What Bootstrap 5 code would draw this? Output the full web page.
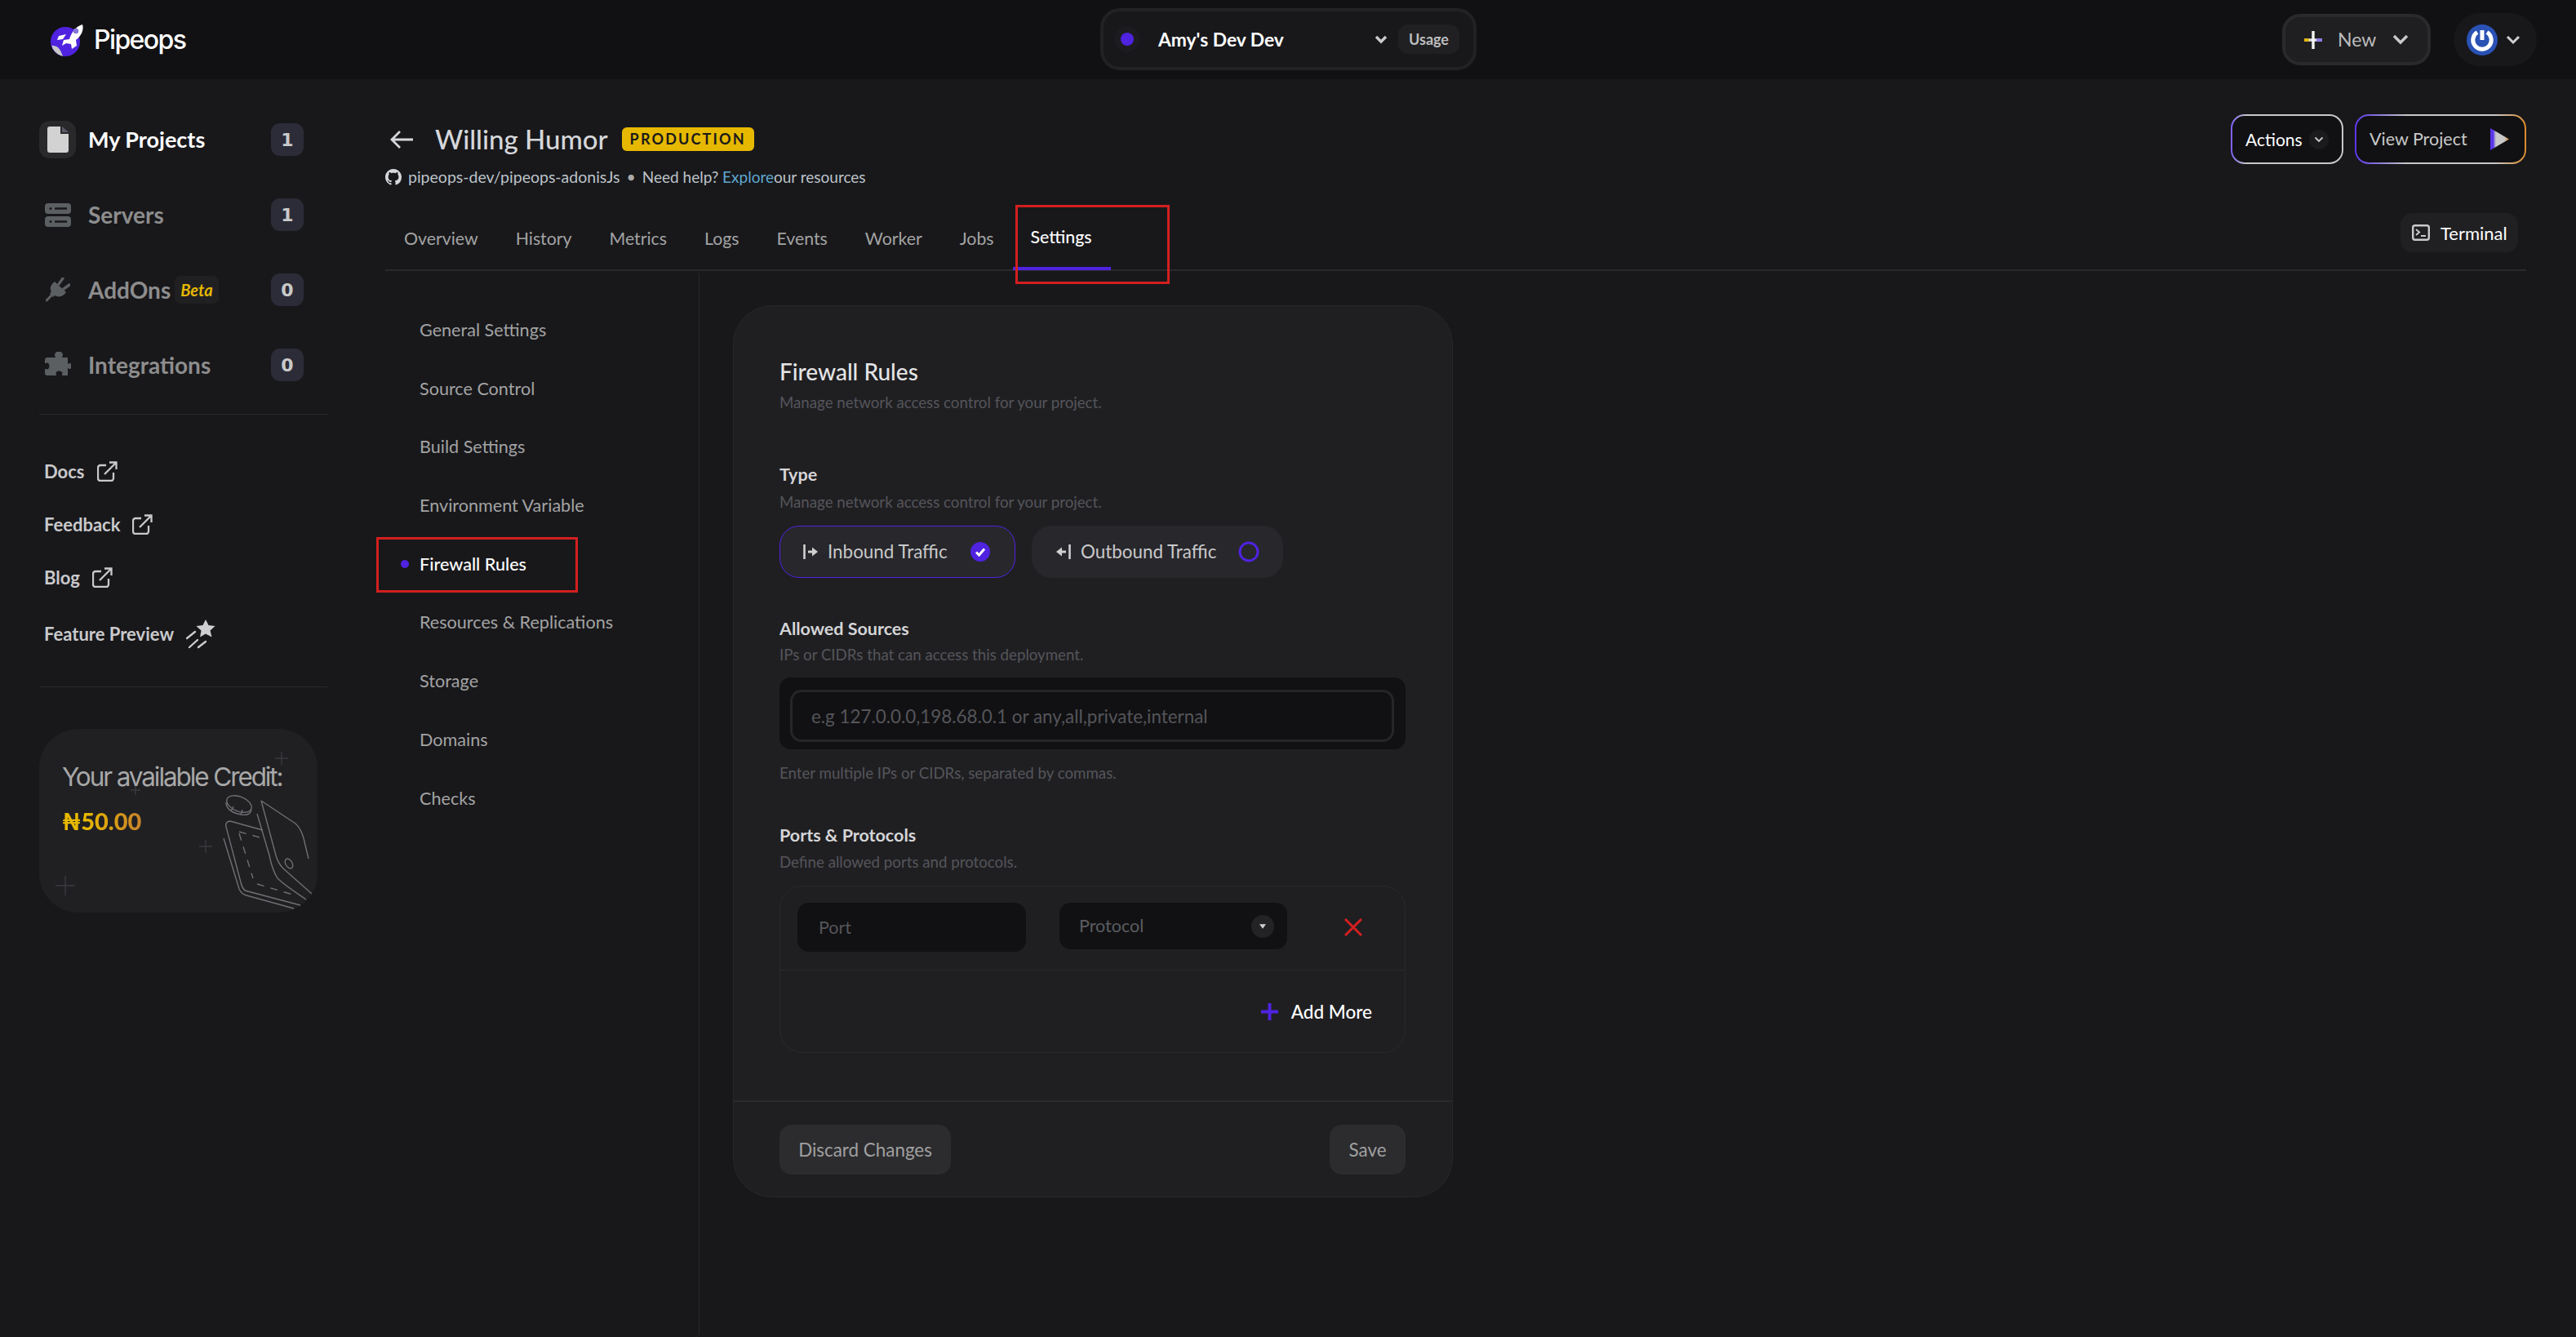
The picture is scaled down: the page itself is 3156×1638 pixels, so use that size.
<!DOCTYPE html>
<html lang="en">
<head>
<meta charset="utf-8">
<title>Pipeops - Firewall Rules</title>
<link href="https://cdn.jsdelivr.net/npm/bootstrap@5.3.0/dist/css/bootstrap.min.css" rel="stylesheet">
<style>
html,body{height:100%}
body{background:#18181b;color:#fff;font-family:"Lato","Liberation Sans",sans-serif;width:3156px;height:1638px;overflow:hidden}
svg{display:block;flex:none}
.topbar{height:97px;background:#111113;padding:0 48px 0 62px;position:relative}
.logo-text{font-family:"Inter","Liberation Sans",sans-serif;font-weight:500;font-size:32px;letter-spacing:-1.6px;color:#fff;margin-left:12px}
.env-pill{position:absolute;left:1348px;top:10px;width:461px;height:76px;background:#18181b;border:4px solid #222225;border-radius:24px;padding:0 17px 0 13px}
.env-dot{width:32px;height:32px;border-radius:50%;background:#1c1c20;display:flex;align-items:center;justify-content:center;margin-right:22px}
.env-dot i{display:block;width:16px;height:16px;border-radius:50%;background:#4f23e0}
.env-name{font-size:22.800px;font-weight:700;color:#fff}
.usage-btn{background:#202023;color:#bdbdbd;font-size:18px;font-weight:700;border:0;border-radius:12px;width:75px;height:36px;padding:0;margin-left:13px}
.new-btn{width:182px;height:63px;background:#1f1f22;border:4px solid #2a2a2d;border-radius:22px;color:#bdbdbd;font-size:23px;padding:0 23px;margin-right:28px}
.new-btn:hover{background:#1f1f22;color:#bdbdbd;border-color:#2a2a2d}
.new-label{margin-left:19px}
.avatar-pill{width:102px;height:65px;border-radius:33px;background:#18181b;padding-left:16px;gap:10px}
.side{width:472px;flex:none;padding:28px 0 0 48px}
.side-item{height:92px;width:324px;font-size:28px;font-weight:700;color:#8d8d8d;padding:0}
.side-item.now{color:#fff;font-size:27px}
.ico-box{width:45px;height:46px;border-radius:13px;display:flex;align-items:center;justify-content:center;margin-right:15px}
.now .ico-box{background:#29292c}
.count{width:40px;height:40px;border-radius:11px;background:#2c2c38;color:#c9c9c9;font-family:"DejaVu Sans","Liberation Sans",sans-serif;font-size:22px;font-weight:700;display:flex;align-items:center;justify-content:center;padding:0;margin-left:auto}
.beta{font-style:italic;font-size:20px;font-weight:700;color:#e6b800;background:#202023;border-radius:7px;padding:2px 7px;margin-left:5px}
.side-rule{width:353px;height:1px;background:#29292c;margin:14px 0 0}
.side-links{padding:37px 0 0 6px;height:319px}
.side-link{height:65px;font-size:22px;font-weight:700;color:#c9c9cb;text-decoration:none;gap:15px}
.side-link:nth-child(4){margin-top:4px}
.credit{width:341px;height:225px;margin-top:51px;background:#202023;border-radius:48px;position:relative;overflow:hidden;padding:40px 0 0 28px}
.credit-title{font-family:"Inter","Liberation Sans",sans-serif;font-size:31.500px;line-height:38px;letter-spacing:-2.100px;color:#a8a8a8;white-space:nowrap}
.credit-sum{font-size:29px;font-weight:900;line-height:36px;margin-top:17px;background:linear-gradient(90deg,#e6b800 30%,#c9822a);-webkit-background-clip:text;background-clip:text;color:transparent;display:inline-block}
.credit-art{position:absolute;left:0;top:0}
.main-area{flex:1;min-width:0;padding:43px 61px 0 0}
.title-row{height:112px}
.back-arrow{margin:0 27px 0 6px}
.title-text{font-size:33px;font-weight:500;color:#d5d7da;line-height:61px;margin:0}
.prod{background:#e6b800;color:#1a1a1a;font-size:18px;font-weight:700;letter-spacing:2.150px;border-radius:6px;padding:0 10px;height:29px;line-height:29px;margin-left:17px}
.repo{font-size:19.500px;color:#bcc3c9;line-height:24px;margin-top:4px}
.repo a{color:#5fa7cf;text-decoration:none}
.repo b{font-weight:400;margin:0 8px;color:#aaa}
.repo-help{font-size:19px}
.grad-btn{height:61px;border:2px solid transparent;border-radius:17px;font-size:21px;padding:0 16px}
.actions-btn{width:138px;color:#fff;background:linear-gradient(#111113,#111113) padding-box,linear-gradient(90deg,#7b5cf0,#c8c8c8 14%,#c8c8c8) border-box}
.view-btn{width:210px;color:#c9c9c9;margin-left:14px;font-size:21.500px;background:linear-gradient(#111113,#111113) padding-box,linear-gradient(90deg,#5a35ea,#c8c8c8 30%,#c8c8c8 82%,#d98a2a) border-box}
.chev-dot{width:24px;height:24px;border-radius:50%;background:#1b1b1e;display:flex;align-items:center;justify-content:center}
.play-ico{margin-right:3px}
.tabs-row{height:80px;border-bottom:2px solid #2a2a2d}
.tab-list{height:80px}
.tab-link{position:relative;font-size:21.300px;color:#a3a3a3;padding:4px 23px 0;height:80px;display:flex;align-items:center}
.tab-link:hover{color:#a3a3a3}
.tab-link.active-tab{color:#fff;border-bottom:4px solid #4f23e0;font-weight:500;width:120px;padding:4px 0 0 22px}
.red-a{position:absolute;left:3px;top:0;width:189px;height:97px;border:3px solid #d41f1f;pointer-events:none}
.term-btn{width:144px;height:48px;background:#202023;color:#fff;border:0;border-radius:14px;font-size:22px;margin:0 10px 12px 0;padding:0 14px;gap:13px}
.term-btn:hover{background:#202023;color:#fff}
.set-nav{width:385px;flex:none;border-right:1px solid #29292c;padding-top:43px;height:1306px;gap:13.700px}
.set-item{height:58px;font-size:21.600px;color:#a3a3a3;padding:0 0 0 42px;position:relative;line-height:58px;background:none;border:0;border-radius:0}
.set-item.here{color:#fff;font-weight:500;padding-left:19px;display:flex;align-items:center;gap:13px}
.set-item.here i{display:block;width:10px;height:10px;border-radius:50%;background:#4f23e0}
.red-b{position:absolute;left:-11px;top:-4px;width:247px;height:68px;border:3px solid #d41f1f;pointer-events:none}
.fw-card{width:882px;height:1093px;margin:42px 0 0 41px;background:#1f1f22;border:1px solid #27272b;border-radius:48px;color:#fff}
.fw-body{padding:63px 57px 0 56px;height:974px}
.fw-title{font-size:28px;font-weight:500;line-height:34px;color:#e4e4e6;margin:0}
.fw-sub{font-size:18.700px;line-height:22px;color:#55555a;margin:0}
.fw-label{font-size:21.500px;font-weight:700;line-height:26px;color:#d5d5d7;margin:0}
.m10{margin-top:10px}.m8{margin-top:8px}.m9{margin-top:9px}.m10b{margin-top:10px}
.m64{margin-top:64px}.m49{margin-top:49px}.m52{margin-top:52px}.m18{margin-top:18px}
.toggles{margin-top:18px;gap:20px}
.toggle{height:64px;background:#27272c;border-radius:24px;border:1.500px solid #27272c;font-size:22.400px;color:#c9c9c9;padding:0;gap:12px}
.toggle.on{width:289px;border-color:#4f23e0;padding-left:28px}
.toggle.off{width:308px;padding-left:29px}
.toggle .sp{margin-left:auto}
.on .sp{margin-right:30px}.off .sp{margin-right:28px}
.ip-wrap{margin-top:17px;height:88px;background:#111113;border-radius:14px;padding:15px 14px 9px 13px}
.ip-input{height:64px;background:#111113;border:3px solid #26262a;border-radius:14px;color:#fff;font-size:22.400px;padding:0 23px;box-shadow:none}
.ip-input::placeholder,.port-input::placeholder{color:#55555a;opacity:1}
.port-box{margin-top:18px;height:205px;border:1px solid #29292c;border-radius:28px;overflow:hidden}
.port-row{height:103px;border-bottom:1px solid #29292c;padding:20px 0 0 21px}
.port-input{width:280px;height:60px;background:#111113;border:0;border-radius:14px;color:#fff;font-size:21.500px;padding:0 26px;box-shadow:none}
.proto{width:279px;height:57px;background:#111113;border-radius:14px;margin-left:41px;padding:0 16px 0 24px;font-size:21.500px;color:#5c5c60}
.proto-c{width:28px;height:28px;border-radius:50%;background:#232326;display:flex;align-items:center;justify-content:center}
.x-icon{margin-left:70px;margin-top:19px}
.add-row{height:101px;padding:0 40px 0 0;gap:16px;font-size:22.500px;font-weight:500;color:#fff}
.fw-foot{height:118px;border-top:2px solid #2a2a2d;padding:28px 57px 0 56px;background:none;border-radius:0}
.foot-btn{height:61px;background:#2c2c2f;border:0;border-radius:15px;color:#a0a0a0;font-size:22.400px;padding:0}
.foot-btn:hover{background:#2c2c2f;color:#a0a0a0}
.w-disc{width:210px}.w-save{width:93px}
</style>
</head>
<body>
<nav class="topbar d-flex align-items-center justify-content-between">
  <div class="d-flex align-items-center">
    <svg width="41" height="40" viewBox="0 0 41 40">
      <circle cx="18" cy="22" r="18" fill="#4f23e0"/>
      <path d="M2 27c5 0 8 2 10 6 1 2 2 4 3 7A18 18 0 0 1 1 26z" fill="#c8c8c8"/>
      <path d="M39 1c2 6-1 14-8 19l1 7-6 4-1-6-6-1-5 3 2-7 7-1C26 9 32 3 39 1z" fill="#fff"/>
      <path d="M10 15l9-2-4 6-7 1z" fill="#fff"/>
      <circle cx="31" cy="9" r="3.200" fill="#8474d8"/>
    </svg>
    <span class="logo-text">Pipeops</span>
  </div>
  <div class="env-pill d-flex align-items-center">
    <span class="env-dot"><i></i></span>
    <span class="env-name">Amy's Dev Dev</span>
    <svg class="ms-auto" width="16" height="11" viewBox="0 0 16 11"><path d="M2 2l6 6 6-6" fill="none" stroke="#c9c9c9" stroke-width="3.400"/></svg>
    <button class="btn usage-btn" type="button">Usage</button>
  </div>
  <div class="d-flex align-items-center ms-auto">
    <button class="btn new-btn d-flex align-items-center" type="button">
      <svg width="22" height="22" viewBox="0 0 22 22"><path d="M0 11h22" stroke="#e6e6e6" stroke-width="3.400"/><path d="M0 11h6" stroke="#e6b800" stroke-width="3.400"/><path d="M15 11h7" stroke="#8a74e8" stroke-width="3.400"/><path d="M11 0v22" stroke="#f4f4f4" stroke-width="3.400"/></svg>
      <span class="new-label">New</span>
      <svg class="ms-auto" width="20" height="13" viewBox="0 0 20 13"><path d="M2 2l8 8 8-8" fill="none" stroke="#c9c9c9" stroke-width="3.400"/></svg>
    </button>
    <div class="avatar-pill d-flex align-items-center">
      <svg width="38" height="38" viewBox="0 0 38 38"><circle cx="19" cy="19" r="19" fill="#2a52b5"/><path d="M13 9.500a11.200 11.200 0 1 0 12 0" fill="none" stroke="#fff" stroke-width="5"/><path d="M19 7v12" stroke="#fff" stroke-width="5"/></svg>
      <svg width="18" height="12" viewBox="0 0 18 12"><path d="M2 2l7 7 7-7" fill="none" stroke="#d0d0d0" stroke-width="3"/></svg>
    </div>
  </div>
</nav>

<div class="d-flex">
  <aside class="side">
    <div class="side-item now d-flex align-items-center">
      <span class="ico-box"><svg width="26" height="32" viewBox="0 0 26 32"><path d="M3 0h13v9h10v20a3 3 0 0 1-3 3H3a3 3 0 0 1-3-3V3a3 3 0 0 1 3-3z" fill="#d2d2d2"/><path d="M18 0l8 7h-8z" fill="#5a5a66"/></svg></span>
      <span>My Projects</span><span class="count">1</span>
    </div>
    <div class="side-item d-flex align-items-center">
      <span class="ico-box"><svg width="32" height="29" viewBox="0 0 32 29"><rect width="32" height="13" rx="4" fill="#5c5f62"/><rect y="16" width="32" height="13" rx="4" fill="#5c5f62"/><path d="M12 6.500h15M12 22.500h15" stroke="#18181b" stroke-width="2.400"/><circle cx="7" cy="6.500" r="1.500" fill="#18181b"/><circle cx="7" cy="22.500" r="1.500" fill="#18181b"/></svg></span>
      <span>Servers</span><span class="count">1</span>
    </div>
    <div class="side-item d-flex align-items-center">
      <span class="ico-box"><svg width="30" height="30" viewBox="0 0 30 30"><path d="M1 28l7-7" stroke="#5c5f62" stroke-width="3" stroke-linecap="round"/><path d="M11 5l14 13c-3 5-9 7-14 4l-2 2-4-4 2-3C4 13 7 8 11 5z" fill="#5c5f62"/><path d="M16 8l5-7M22 14l7-5" stroke="#5c5f62" stroke-width="3.400" stroke-linecap="round"/></svg></span>
      <span>AddOns</span><span class="beta">Beta</span><span class="count">0</span>
    </div>
    <div class="side-item d-flex align-items-center">
      <span class="ico-box"><svg width="32" height="32" viewBox="0 0 32 32"><path d="M12 4a5 4.500 0 0 1 10 0c0 1.500-1 2-1 3h7v8c1 0 1.500-1 2-1a3.500 3.500 0 0 1 0 7c-.5 0-1-1-2-1v9h-7c0-2 1-3 0-4-2-2-6-2-7 0-1 1 0 3 0 4H3a3 3 0 0 1-3-3v-5c2 0 3 1 4 0 2-2 2-5 0-7-1-1-2 0-4 0V10a3 3 0 0 1 3-3h10c0-1-1-1.500-1-3z" fill="#5c5f62"/></svg></span>
      <span>Integrations</span><span class="count">0</span>
    </div>
    <div class="side-rule"></div>
    <div class="side-links d-flex flex-column">
      <a class="side-link d-flex align-items-center" href="#">Docs<svg width="25" height="25" viewBox="0 0 25 25"><path d="M11 5H4a3 3 0 0 0-3 3v13a3 3 0 0 0 3 3h13a3 3 0 0 0 3-3v-7M9 16L23 2M15 1.500h8.500V10" fill="none" stroke="#c9c9cb" stroke-width="2.300"/></svg></a>
      <a class="side-link d-flex align-items-center" href="#">Feedback<svg width="25" height="25" viewBox="0 0 25 25"><path d="M11 5H4a3 3 0 0 0-3 3v13a3 3 0 0 0 3 3h13a3 3 0 0 0 3-3v-7M9 16L23 2M15 1.500h8.500V10" fill="none" stroke="#c9c9cb" stroke-width="2.300"/></svg></a>
      <a class="side-link d-flex align-items-center" href="#">Blog<svg width="25" height="25" viewBox="0 0 25 25"><path d="M11 5H4a3 3 0 0 0-3 3v13a3 3 0 0 0 3 3h13a3 3 0 0 0 3-3v-7M9 16L23 2M15 1.500h8.500V10" fill="none" stroke="#c9c9cb" stroke-width="2.300"/></svg></a>
      <a class="side-link d-flex align-items-center" href="#">Feature Preview<svg width="36" height="36" viewBox="0 0 36 36"><path d="M24 0l3.500 7 8 1-6 5.500 2 8-7.500-4-7 4 1.500-8-6-5.500 8-1z" fill="#cfcfd1"/><path d="M1 23l10-8M4 34l10-9M15 34l9-7" stroke="#cfcfd1" stroke-width="2.300" stroke-linecap="round"/></svg></a>
    </div>
    <div class="side-rule"></div>
    <div class="credit">
      <svg class="credit-art" width="341" height="225" viewBox="0 0 341 225">
        <g stroke="#3a3a40" stroke-width="1.400" fill="none">
          <path d="M289 36h16M297 28v16M112 75h12M118 69v12M196 144h16M204 136v16M20 192h24M32 180v24"/>
        </g>
        <g stroke="#6f6f73" stroke-width="1.400" fill="none">
          <ellipse cx="245" cy="92" rx="16" ry="9" transform="rotate(22 245 92)"/>
          <path d="M229 90c0 7 6 12 14 14 7 2 15 3 17-5M235 101l3-6M247 105l2-6"/>
          <path d="M272 88l42 28c5 4 8 11 10 18l6 25M272 88l18 67c2 7 5 12 9 16l35 31"/>
          <path d="M267 104l15 51c2 10 5 20 10 28 8 8 22 17 35 26"/>
          <path d="M274 124l-40-11c-4 0-6 3-5 7l18 68c1 5 3 8 5 10l68 18"/>
          <path d="M226 134l19 62c2 5 5 7 9 8l58 16"/>
          <path d="M245 126l29 8M245 128l17 55M267 190l47 14" stroke-dasharray="9 8"/>
          <ellipse cx="306" cy="165" rx="4" ry="6.500" transform="rotate(-30 306 165)"/>
        </g>
      </svg>
      <div class="credit-title position-relative">Your available Credit:</div>
      <div class="credit-sum position-relative">₦50.00</div>
    </div>
  </aside>

  <main class="main-area">
    <div class="title-row d-flex justify-content-between align-items-start">
      <div>
        <div class="d-flex align-items-center">
          <svg class="back-arrow" width="28" height="22" viewBox="0 0 28 22"><path d="M28 11H2M12 1L2 11l10 10" fill="none" stroke="#d5d7da" stroke-width="2.800"/></svg>
          <h1 class="title-text">Willing Humor</h1>
          <span class="prod">PRODUCTION</span>
        </div>
        <div class="repo d-flex align-items-center">
          <svg class="me-2" width="20" height="20" viewBox="0 0 16 16"><path fill="#d5d7da" d="M8 0C3.580 0 0 3.580 0 8c0 3.540 2.290 6.530 5.470 7.590.4.070.55-.17.55-.38 0-.19-.01-.82-.01-1.490-2.010.37-2.530-.49-2.690-.94-.09-.23-.48-.94-.82-1.130-.28-.15-.68-.52-.01-.53.63-.01 1.080.58 1.230.82.720 1.210 1.870.87 2.330.66.070-.52.280-.87.510-1.070-1.780-.2-3.640-.89-3.640-3.950 0-.87.310-1.590.82-2.150-.08-.2-.36-1.020.08-2.120 0 0 .67-.21 2.200.82.640-.18 1.320-.27 2-.27s1.360.09 2 .27c1.530-1.040 2.200-.82 2.200-.82.44 1.100.16 1.920.08 2.120.51.560.82 1.270.82 2.150 0 3.070-1.870 3.750-3.650 3.950.29.250.54.730.54 1.480 0 1.070-.01 1.930-.01 2.200 0 .21.150.460.550.380A8.010 8.010 0 0 0 16 8c0-4.420-3.580-8-8-8z"/></svg>
          <span>pipeops-dev/pipeops-adonisJs</span><b>•</b><span class="repo-help">Need help? <a href="#">Explore</a>our resources</span>
        </div>
      </div>
      <div class="d-flex">
        <button class="btn grad-btn actions-btn d-flex align-items-center justify-content-between" type="button">Actions<span class="chev-dot"><svg width="12" height="8" viewBox="0 0 12 8"><path d="M1.500 1.500L6 6l4.500-4.500" fill="none" stroke="#c9c9c9" stroke-width="1.800"/></svg></span></button>
        <button class="btn grad-btn view-btn d-flex align-items-center justify-content-between" type="button">View Project<svg class="play-ico" width="23" height="27" viewBox="0 0 23 27"><defs><linearGradient id="pl"><stop offset=".15" stop-color="#5a35ea"/><stop offset=".3" stop-color="#c8c8c8"/><stop offset=".75" stop-color="#c8c8c8"/><stop offset="1" stop-color="#d98a2a"/></linearGradient></defs><path d="M0 0l23 13.500L0 27z" fill="url(#pl)"/></svg></button>
      </div>
    </div>

    <div class="tabs-row d-flex justify-content-between align-items-center">
      <ul class="nav tab-list">
        <li class="nav-item"><a class="nav-link tab-link" href="#">Overview</a></li>
        <li class="nav-item"><a class="nav-link tab-link" href="#">History</a></li>
        <li class="nav-item"><a class="nav-link tab-link" href="#">Metrics</a></li>
        <li class="nav-item"><a class="nav-link tab-link" href="#">Logs</a></li>
        <li class="nav-item"><a class="nav-link tab-link" href="#">Events</a></li>
        <li class="nav-item"><a class="nav-link tab-link" href="#">Worker</a></li>
        <li class="nav-item"><a class="nav-link tab-link" href="#">Jobs</a></li>
        <li class="nav-item"><a class="nav-link tab-link active-tab" href="#">Settings<span class="red-a"></span></a></li>
      </ul>
      <button class="btn term-btn d-flex align-items-center" type="button"><svg width="22" height="20" viewBox="0 0 22 20"><rect x="1.200" y="1.200" width="19.600" height="17.600" rx="2.500" fill="none" stroke="#c9c9c9" stroke-width="2.400"/><path d="M5 6l4 3.500L5 13M11 14h6" fill="none" stroke="#c9c9c9" stroke-width="2"/></svg>Terminal</button>
    </div>

    <div class="d-flex align-items-start">
      <div class="set-nav list-group">
        <div class="set-item list-group-item">General Settings</div>
        <div class="set-item list-group-item">Source Control</div>
        <div class="set-item list-group-item">Build Settings</div>
        <div class="set-item list-group-item">Environment Variable</div>
        <div class="set-item list-group-item here"><i></i>Firewall Rules<span class="red-b"></span></div>
        <div class="set-item list-group-item">Resources &amp; Replications</div>
        <div class="set-item list-group-item">Storage</div>
        <div class="set-item list-group-item">Domains</div>
        <div class="set-item list-group-item">Checks</div>
      </div>

      <section class="card fw-card">
        <div class="card-body fw-body">
          <h2 class="fw-title">Firewall Rules</h2>
          <p class="fw-sub m10">Manage network access control for your project.</p>

          <p class="fw-label m64">Type</p>
          <p class="fw-sub m10b">Manage network access control for your project.</p>
          <div class="toggles d-flex">
            <div class="toggle on d-flex align-items-center">
              <svg width="18" height="18" viewBox="0 0 18 18"><path d="M1.500 0v18" stroke="#d0d0d0" stroke-width="2.600"/><path d="M6 9h7" stroke="#d0d0d0" stroke-width="3"/><path d="M11 3.500L18 9l-7 5.500z" fill="#d0d0d0"/></svg>
              <span>Inbound Traffic</span>
              <svg class="sp" width="24" height="24" viewBox="0 0 24 24"><circle cx="12" cy="12" r="12" fill="#4f23e0"/><path d="M7 12.500l3.500 3.500L17 8.500" fill="none" stroke="#fff" stroke-width="3"/></svg>
            </div>
            <div class="toggle off d-flex align-items-center">
              <svg width="18" height="18" viewBox="0 0 18 18"><path d="M16.500 0v18" stroke="#d0d0d0" stroke-width="2.600"/><path d="M5 9h7" stroke="#d0d0d0" stroke-width="3"/><path d="M7 3.500L0 9l7 5.500z" fill="#d0d0d0"/></svg>
              <span>Outbound Traffic</span>
              <svg class="sp" width="26" height="26" viewBox="0 0 26 26"><circle cx="13" cy="13" r="11" fill="none" stroke="#4f23e0" stroke-width="3"/></svg>
            </div>
          </div>

          <p class="fw-label m49">Allowed Sources</p>
          <p class="fw-sub m8">IPs or CIDRs that can access this deployment.</p>
          <div class="ip-wrap"><input class="form-control ip-input" type="text" placeholder="e.g 127.0.0.0,198.68.0.1 or any,all,private,internal"></div>
          <p class="fw-sub m18">Enter multiple IPs or CIDRs, separated by commas.</p>

          <p class="fw-label m52">Ports &amp; Protocols</p>
          <p class="fw-sub m9">Define allowed ports and protocols.</p>
          <div class="port-box">
            <div class="port-row d-flex align-items-start">
              <input class="form-control port-input" type="text" placeholder="Port">
              <div class="proto d-flex align-items-center justify-content-between">
                <span>Protocol</span>
                <span class="proto-c"><svg width="8" height="6" viewBox="0 0 10 7"><path d="M0 0h10L5 7z" fill="#d0d0d0"/></svg></span>
              </div>
              <svg class="x-icon" width="22" height="22" viewBox="0 0 22 22"><path d="M1 1l20 20M21 1L1 21" stroke="#d41f1f" stroke-width="3"/></svg>
            </div>
            <div class="add-row d-flex align-items-center justify-content-end">
              <svg width="21" height="21" viewBox="0 0 21 21"><path d="M0 10.500h21M10.500 0v21" stroke="#4f23e0" stroke-width="4"/></svg>
              <span>Add More</span>
            </div>
          </div>
        </div>
        <div class="card-footer fw-foot d-flex justify-content-between">
          <button class="btn foot-btn w-disc" type="button">Discard Changes</button>
          <button class="btn foot-btn w-save" type="button">Save</button>
        </div>
      </section>
    </div>
  </main>
</div>
<script src="https://cdn.jsdelivr.net/npm/bootstrap@5.3.0/dist/js/bootstrap.bundle.min.js"></script>
</body>
</html>
